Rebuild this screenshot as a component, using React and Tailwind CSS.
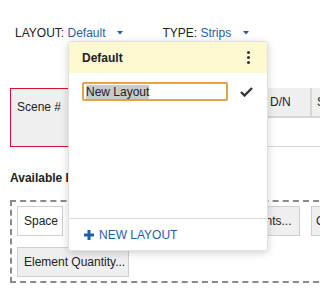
import React from "react";

const Caret = () => (
  <svg width="6" height="4" viewBox="0 0 6 4" className="inline-block">
    <path d="M0 0 L6 0 L3 3.5 Z" fill="#1f5fa6" />
  </svg>
);

const LayoutMenu = () => {
  return (
    <div className="absolute left-[68px] top-[41px] w-[200px] h-[210px] bg-white border border-[#e2e2e2] rounded-[3px] shadow-[0_2px_8px_rgba(0,0,0,0.18)] flex flex-col overflow-hidden">
      <div className="h-[31px] bg-[#fcf9d0] flex items-center justify-between pl-[13px] pr-[17px] shrink-0">
        <span className="font-bold text-[12px] text-[#222]">Default</span>
        <div className="flex flex-col gap-[2px]">
          <span className="w-[3px] h-[3px] rounded-full bg-[#333]" />
          <span className="w-[3px] h-[3px] rounded-full bg-[#333]" />
          <span className="w-[3px] h-[3px] rounded-full bg-[#333]" />
        </div>
      </div>
      <div className="flex-1 pt-[9px] pl-[13px] pr-[14px]">
        <div className="flex items-center justify-between">
          <div className="w-[146px] h-[19px] border-2 border-[#e3a14a] rounded-[2px] flex items-center px-[2px]">
            <span className="bg-[#c9c9c9] text-[12px] leading-[14px] text-[#222]">New Layout</span>
          </div>
          <svg width="13" height="10" viewBox="0 0 13 10">
            <path d="M1 5 L4.5 8.5 L12 1" stroke="#333" strokeWidth="2.4" fill="none" />
          </svg>
        </div>
      </div>
      <div className="h-[32px] border-t border-[#dcdcdc] flex items-center pl-[15px] gap-[5px] shrink-0">
        <svg width="10" height="10" viewBox="0 0 10 10">
          <path d="M5 0 V10 M0 5 H10" stroke="#1f5fa6" strokeWidth="3" />
        </svg>
        <span className="text-[12px] text-[#1f5fa6]">NEW LAYOUT</span>
      </div>
    </div>
  );
};

const FieldButton = ({ label, white, className = "" }) => (
  <button
    className={`h-[30px] border border-[#cfcfcf] text-[12px] text-[#222] whitespace-nowrap shrink-0 ${
      white ? "bg-white" : "bg-[#efefef]"
    } ${className}`}
  >
    {label}
  </button>
);

export default function App() {
  return (
    <div className="relative w-[320px] h-[296px] overflow-hidden bg-white font-['Liberation_Sans',Arial,sans-serif] text-[#222]">
      <div className="flex items-center h-[14px] mt-[26px] pl-[15px] text-[12px]">
        <span>LAYOUT:&nbsp;</span>
        <span className="text-[#1f5fa6]">Default</span>
        <span className="ml-[11px] mr-[40px] flex">
          <Caret />
        </span>
        <span>TYPE:&nbsp;</span>
        <span className="text-[#1f5fa6]">Strips</span>
        <span className="ml-[12px] flex">
          <Caret />
        </span>
      </div>

      <div className="flex mt-[48px] ml-[10px] w-[420px] text-[12px]">
        <div className="w-[90px] h-[59px] bg-[#efefef] border border-[#d0142c] pl-[6px] pt-[9px] shrink-0">
          Scene #
        </div>
        <div className="flex flex-col shrink-0">
          <div className="flex h-[30px] bg-[#efefef] border-b-2 border-[#d6d6d6]">
            <div className="w-[168px] border-r-2 border-[#d6d6d6]" />
            <div className="w-[44px] border-r-2 border-[#d6d6d6] flex items-center pl-[2px]">D/N</div>
            <div className="w-[80px] flex items-center pl-[5px]">Set</div>
          </div>
          <div className="h-[29px] border-b border-[#d6d6d6]" />
        </div>
      </div>

      <div className="mt-[22px] ml-[10px] font-bold text-[12px]">Available Fields</div>

      <div className="mt-[13px] ml-[10px] w-[400px] border-2 border-dashed border-[#8a8a8a] pt-[4px] pb-[4px] pl-[5px] flex flex-col gap-[11px]">
        <div className="flex gap-[11px]">
          <FieldButton label="Space" white className="w-[46px] px-[6px]" />
          <FieldButton label="Cast Members" className="w-[138px] px-[6px]" />
          <FieldButton label="Elements..." className="w-[77px] px-[6px]" />
          <FieldButton label="Cast" className="w-[60px] text-left pl-[4px]" />
        </div>
        <div className="flex">
          <FieldButton label="Element Quantity..." className="w-[112px] px-[6px]" />
        </div>
      </div>

      <LayoutMenu />
    </div>
  );
}
